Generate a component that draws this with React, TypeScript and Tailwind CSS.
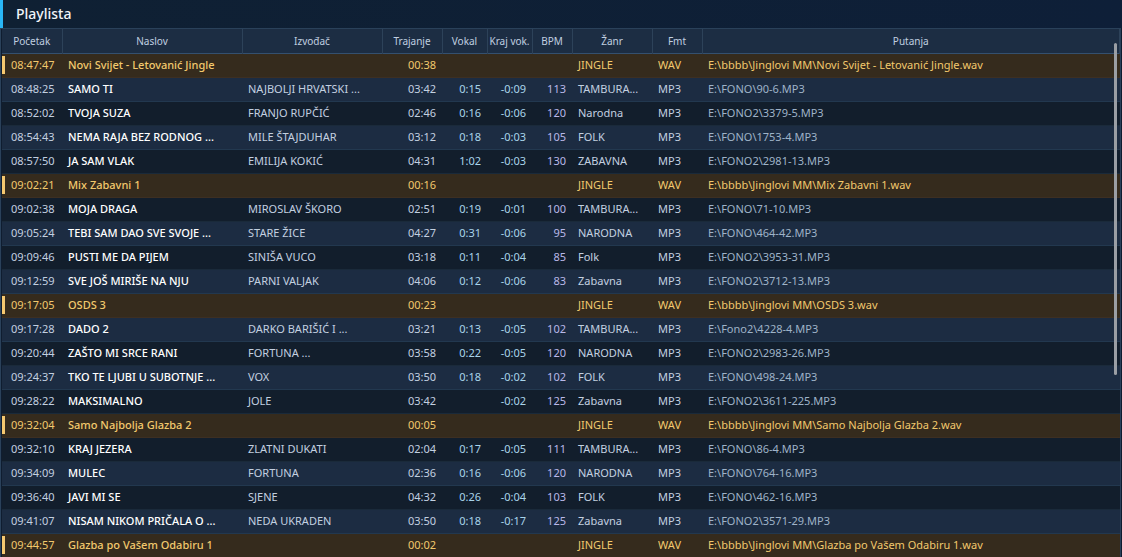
import React from 'react';
import clsx from 'clsx';

interface Track {
  start: string;
  title: string;
  artist?: string;
  duration: string;
  vocal?: string;
  vocalEnd?: string;
  bpm?: string;
  genre: string;
  format: string;
  path: string;
}

const jingle = (start: string, title: string, duration: string): Track => ({
  start,
  title,
  duration,
  genre: 'JINGLE',
  format: 'WAV',
  path: `E:\\bbbb\\Jinglovi MM\\${title}.wav`,
});

const song = (
  start: string,
  title: string,
  artist: string,
  duration: string,
  vocal: string,
  vocalEnd: string,
  bpm: string,
  genre: string,
  file: string,
): Track => ({
  start,
  title,
  artist,
  duration,
  vocal,
  vocalEnd,
  bpm,
  genre,
  format: 'MP3',
  path: `E:\\${file}.MP3`,
});

const tracks: Track[] = [
  jingle('08:47:47', 'Novi Svijet - Letovanić Jingle', '00:38'),
  song('08:48:25', 'SAMO TI', 'NAJBOLJI HRVATSKI ...', '03:42', '0:15', '-0:09', '113', 'TAMBURA...', 'FONO\\90-6'),
  song('08:52:02', 'TVOJA SUZA', 'FRANJO RUPČIĆ', '02:46', '0:16', '-0:06', '120', 'Narodna', 'FONO2\\3379-5'),
  song('08:54:43', 'NEMA RAJA BEZ RODNOG ...', 'MILE ŠTAJDUHAR', '03:12', '0:18', '-0:03', '105', 'FOLK', 'FONO\\1753-4'),
  song('08:57:50', 'JA SAM VLAK', 'EMILIJA KOKIĆ', '04:31', '1:02', '-0:03', '130', 'ZABAVNA', 'FONO2\\2981-13'),
  jingle('09:02:21', 'Mix Zabavni 1', '00:16'),
  song('09:02:38', 'MOJA DRAGA', 'MIROSLAV ŠKORO', '02:51', '0:19', '-0:01', '100', 'TAMBURA...', 'FONO\\71-10'),
  song('09:05:24', 'TEBI SAM DAO SVE SVOJE ...', 'STARE ŽICE', '04:27', '0:31', '-0:06', '95', 'NARODNA', 'FONO\\464-42'),
  song('09:09:46', 'PUSTI ME DA PIJEM', 'SINIŠA VUCO', '03:18', '0:11', '-0:04', '85', 'Folk', 'FONO2\\3953-31'),
  song('09:12:59', 'SVE JOŠ MIRIŠE NA NJU', 'PARNI VALJAK', '04:06', '0:12', '-0:06', '83', 'Zabavna', 'FONO2\\3712-13'),
  jingle('09:17:05', 'OSDS 3', '00:23'),
  song('09:17:28', 'DADO 2', 'DARKO BARIŠIĆ I ...', '03:21', '0:13', '-0:05', '102', 'TAMBURA...', 'Fono2\\4228-4'),
  song('09:20:44', 'ZAŠTO MI SRCE RANI', 'FORTUNA ...', '03:58', '0:22', '-0:05', '120', 'NARODNA', 'FONO2\\2983-26'),
  song('09:24:37', 'TKO TE LJUBI U SUBOTNJE ...', 'VOX', '03:50', '0:18', '-0:02', '102', 'FOLK', 'FONO\\498-24'),
  song('09:28:22', 'MAKSIMALNO', 'JOLE', '03:42', '', '-0:02', '125', 'Zabavna', 'FONO2\\3611-225'),
  jingle('09:32:04', 'Samo Najbolja Glazba 2', '00:05'),
  song('09:32:10', 'KRAJ JEZERA', 'ZLATNI DUKATI', '02:04', '0:17', '-0:05', '111', 'TAMBURA...', 'FONO\\86-4'),
  song('09:34:09', 'MULEC', 'FORTUNA', '02:36', '0:16', '-0:06', '120', 'NARODNA', 'FONO\\764-16'),
  song('09:36:40', 'JAVI MI SE', 'SJENE', '04:32', '0:26', '-0:04', '103', 'FOLK', 'FONO\\462-16'),
  song('09:41:07', 'NISAM NIKOM PRIČALA O ...', 'NEDA UKRADEN', '03:50', '0:18', '-0:17', '125', 'Zabavna', 'FONO2\\3571-29'),
  jingle('09:44:57', 'Glazba po Vašem Odabiru 1', '00:02'),
];

const columns = [
  { label: 'Početak', width: 'w-[60px]' },
  { label: 'Naslov', width: 'w-[180px]' },
  { label: 'Izvođač', width: 'w-[140px]' },
  { label: 'Trajanje', width: 'w-[60px]' },
  { label: 'Vokal', width: 'w-[45px]' },
  { label: 'Kraj vok.', width: 'w-[45px]' },
  { label: 'BPM', width: 'w-[40px]' },
  { label: 'Žanr', width: 'w-[80px]' },
  { label: 'Fmt', width: 'w-[50px]' },
  { label: 'Putanja', width: '' },
];

function TrackRow({ track, striped }: { track: Track; striped: boolean }) {
  const isJingle = track.format === 'WAV';
  const text = isJingle ? 'text-[#f2c96d]' : 'text-[#c3d0e0]';

  return (
    <tr
      className={clsx(
        'h-6 border-b',
        isJingle && 'border-[#3d2f22] bg-[#352b1d]',
        !isJingle && striped && 'border-[#22384f] bg-[#1c2c42]',
        !isJingle && !striped && 'border-[#1a2a3a] bg-[#121e2c]',
        text,
      )}
    >
      <td className="p-0">
        <div className={clsx('h-[18px] border-l-3 pl-[6px] leading-[18px]', isJingle ? 'border-[#f5c870]' : 'border-transparent')}>
          {track.start}
        </div>
      </td>
      <td className={clsx('p-0 pl-[6px] font-medium', !isJingle && 'text-white')}>{track.title}</td>
      <td className="p-0 pl-[6px]">{track.artist}</td>
      <td className="p-0 pr-[6px] text-right">{track.duration}</td>
      <td className={clsx('p-0 pr-[6px] text-right', !isJingle && 'text-[#a9d4ea]')}>{track.vocal}</td>
      <td className={clsx('p-0 pr-[6px] text-right', !isJingle && 'text-[#a9d4ea]')}>{track.vocalEnd}</td>
      <td className={clsx('p-0 pr-[6px] text-right', !isJingle && 'text-[#b9b8e8]')}>{track.bpm}</td>
      <td className="p-0 pl-[6px]">{track.genre}</td>
      <td className="p-0 pl-[6px]">{track.format}</td>
      <td className={clsx('truncate p-0 pl-[6px]', !isJingle && 'text-[#9fb3c8]')}>{track.path}</td>
    </tr>
  );
}

function App() {
  return (
    <div className="min-h-screen bg-[#0f1d30] font-['Noto_Sans','Open_Sans',sans-serif]">
      <header className="h-7 border-l-3 border-[#29b6f6] bg-linear-to-r from-[#0f2033] to-[#0e1f38] pl-[13px]">
        <h1 className="text-sm leading-7 font-medium text-[#f1f5f9]">Playlista</h1>
      </header>

      <main className="relative mr-px border border-[#2a415a] pl-px">
        <table className="w-full table-fixed border-collapse text-[11px] leading-4 whitespace-nowrap">
          <thead>
            <tr className="h-6 border-b border-[#34506f] bg-[#1c2d43] text-[10px] text-[#c0cfe0]">
              {columns.map((column) => (
                <th
                  key={column.label}
                  scope="col"
                  className={clsx('overflow-hidden border-r border-[#2d4259] p-0 text-center font-normal', column.width)}
                >
                  {column.label}
                </th>
              ))}
            </tr>
          </thead>
          <tbody>
            {tracks.map((track, index) => (
              <TrackRow key={track.start} track={track} striped={index % 2 === 1} />
            ))}
          </tbody>
        </table>
        <div className="absolute top-[14px] right-[3px] h-[332px] w-[3px] rounded-full bg-[#9a9ea4]" aria-hidden="true" />
      </main>
    </div>
  );
}

export default App;
